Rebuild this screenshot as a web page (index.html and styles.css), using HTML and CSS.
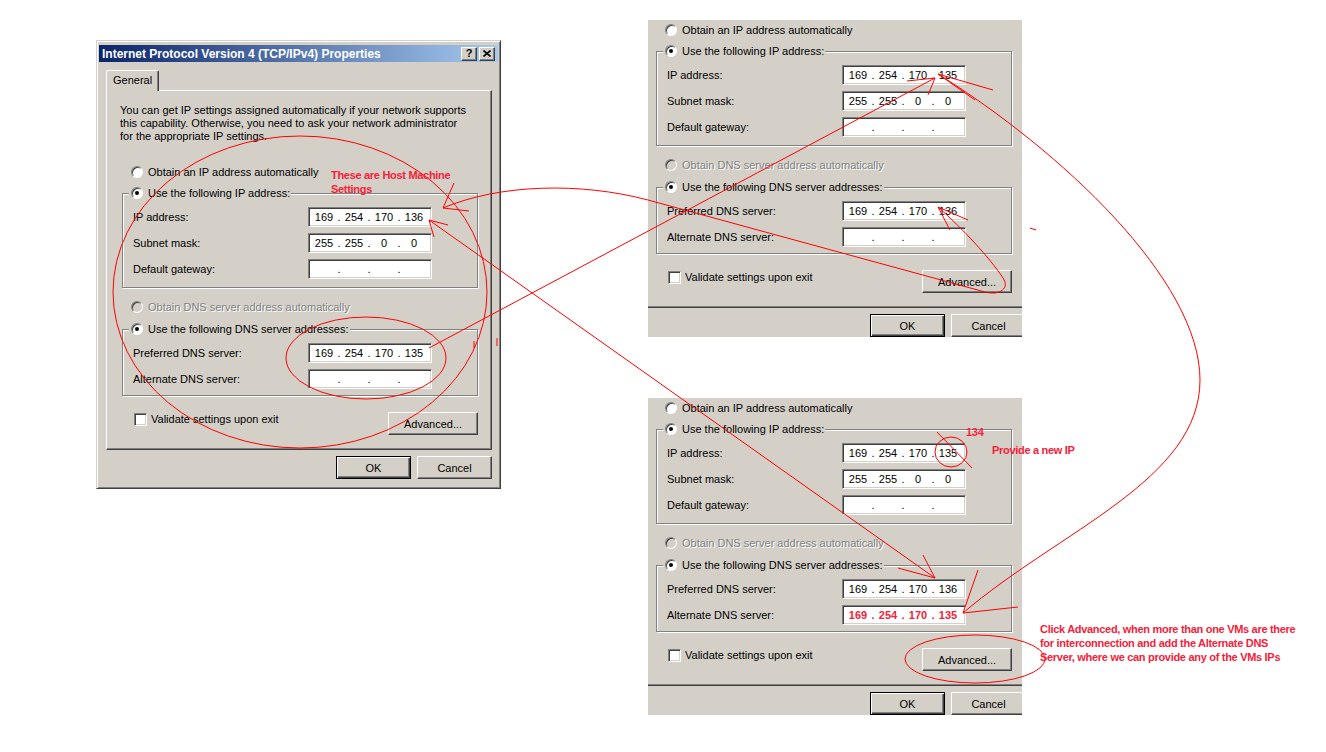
FILE: index.html
```html
<!DOCTYPE html>
<html>
<head>
<meta charset="utf-8">
<title>TCP/IPv4 Properties</title>
<link rel="stylesheet" href="styles.css">
</head>
<body>
<div class="desk">

  <div class="window">
    <div class="titlebar">
      <span class="title">Internet Protocol Version 4 (TCP/IPv4) Properties</span>
      <div class="caps">
        <span class="cap">?</span>
        <span class="cap"><svg width="8" height="7" viewBox="0 0 8 7"><path d="M0.5 0.5 L7.5 6.5 M7.5 0.5 L0.5 6.5" stroke="#000" stroke-width="1.6"/></svg></span>
      </div>
    </div>
    <div class="client">
      <div class="tab">General</div>
      <div class="panel">
        <p class="intro">You can get IP settings assigned automatically if your network supports<br>this capability. Otherwise, you need to ask your network administrator<br>for the appropriate IP settings.</p>
        <div class="opt opt-first"><span class="radio"></span><span>Obtain an IP address automatically</span></div>
        <div class="group group-ip">
          <div class="opt legend"><span class="radio on"></span><span>Use the following IP address:</span></div>
          <div class="field"><span class="lbl">IP address:</span><div class="ip"><span class="oct">169</span><span class="dot">.</span><span class="oct">254</span><span class="dot">.</span><span class="oct">170</span><span class="dot">.</span><span class="oct">136</span></div></div>
          <div class="field"><span class="lbl">Subnet mask:</span><div class="ip"><span class="oct">255</span><span class="dot">.</span><span class="oct">255</span><span class="dot">.</span><span class="oct">0</span><span class="dot">.</span><span class="oct">0</span></div></div>
          <div class="field"><span class="lbl">Default gateway:</span><div class="ip"><span class="oct"></span><span class="dot">.</span><span class="oct"></span><span class="dot">.</span><span class="oct"></span><span class="dot">.</span><span class="oct"></span></div></div>
        </div>
        <div class="opt opt-dns disabled"><span class="radio off"></span><span>Obtain DNS server address automatically</span></div>
        <div class="group group-dns">
          <div class="opt legend"><span class="radio on"></span><span>Use the following DNS server addresses:</span></div>
          <div class="field"><span class="lbl">Preferred DNS server:</span><div class="ip"><span class="oct">169</span><span class="dot">.</span><span class="oct">254</span><span class="dot">.</span><span class="oct">170</span><span class="dot">.</span><span class="oct">135</span></div></div>
          <div class="field"><span class="lbl">Alternate DNS server:</span><div class="ip"><span class="oct"></span><span class="dot">.</span><span class="oct"></span><span class="dot">.</span><span class="oct"></span><span class="dot">.</span><span class="oct"></span></div></div>
        </div>
        <div class="checkrow"><span class="check"></span><span class="clbl">Validate settings upon exit</span><span class="btn btn-adv">Advanced...</span></div>
      </div>
      <div class="footer"><span class="btn btn-default">OK</span><span class="btn">Cancel</span></div>
    </div>
  </div>

  <div class="crop crop-top">
    <div class="cropbody">
      <div class="panel">
        <div class="intro"></div>
        <div class="opt opt-first"><span class="radio"></span><span>Obtain an IP address automatically</span></div>
        <div class="group group-ip">
          <div class="opt legend"><span class="radio on"></span><span>Use the following IP address:</span></div>
          <div class="field"><span class="lbl">IP address:</span><div class="ip"><span class="oct">169</span><span class="dot">.</span><span class="oct">254</span><span class="dot">.</span><span class="oct">170</span><span class="dot">.</span><span class="oct">135</span></div></div>
          <div class="field"><span class="lbl">Subnet mask:</span><div class="ip"><span class="oct">255</span><span class="dot">.</span><span class="oct">255</span><span class="dot">.</span><span class="oct">0</span><span class="dot">.</span><span class="oct">0</span></div></div>
          <div class="field"><span class="lbl">Default gateway:</span><div class="ip"><span class="oct"></span><span class="dot">.</span><span class="oct"></span><span class="dot">.</span><span class="oct"></span><span class="dot">.</span><span class="oct"></span></div></div>
        </div>
        <div class="opt opt-dns disabled"><span class="radio off"></span><span>Obtain DNS server address automatically</span></div>
        <div class="group group-dns">
          <div class="opt legend"><span class="radio on"></span><span>Use the following DNS server addresses:</span></div>
          <div class="field"><span class="lbl">Preferred DNS server:</span><div class="ip"><span class="oct">169</span><span class="dot">.</span><span class="oct">254</span><span class="dot">.</span><span class="oct">170</span><span class="dot">.</span><span class="oct">136</span></div></div>
          <div class="field"><span class="lbl">Alternate DNS server:</span><div class="ip"><span class="oct"></span><span class="dot">.</span><span class="oct"></span><span class="dot">.</span><span class="oct"></span><span class="dot">.</span><span class="oct"></span></div></div>
        </div>
        <div class="checkrow"><span class="check"></span><span class="clbl">Validate settings upon exit</span><span class="btn btn-adv">Advanced...</span></div>
      </div>
      <div class="footer"><span class="btn btn-default">OK</span><span class="btn">Cancel</span></div>
    </div>
  </div>

  <div class="crop crop-bottom">
    <div class="cropbody">
      <div class="panel">
        <div class="intro"></div>
        <div class="opt opt-first"><span class="radio"></span><span>Obtain an IP address automatically</span></div>
        <div class="group group-ip">
          <div class="opt legend"><span class="radio on"></span><span>Use the following IP address:</span></div>
          <div class="field"><span class="lbl">IP address:</span><div class="ip"><span class="oct">169</span><span class="dot">.</span><span class="oct">254</span><span class="dot">.</span><span class="oct">170</span><span class="dot">.</span><span class="oct">135</span></div></div>
          <div class="field"><span class="lbl">Subnet mask:</span><div class="ip"><span class="oct">255</span><span class="dot">.</span><span class="oct">255</span><span class="dot">.</span><span class="oct">0</span><span class="dot">.</span><span class="oct">0</span></div></div>
          <div class="field"><span class="lbl">Default gateway:</span><div class="ip"><span class="oct"></span><span class="dot">.</span><span class="oct"></span><span class="dot">.</span><span class="oct"></span><span class="dot">.</span><span class="oct"></span></div></div>
        </div>
        <div class="opt opt-dns disabled"><span class="radio off"></span><span>Obtain DNS server address automatically</span></div>
        <div class="group group-dns">
          <div class="opt legend"><span class="radio on"></span><span>Use the following DNS server addresses:</span></div>
          <div class="field"><span class="lbl">Preferred DNS server:</span><div class="ip"><span class="oct">169</span><span class="dot">.</span><span class="oct">254</span><span class="dot">.</span><span class="oct">170</span><span class="dot">.</span><span class="oct">136</span></div></div>
          <div class="field"><span class="lbl">Alternate DNS server:</span><div class="ip ip-red"><span class="oct">169</span><span class="dot">.</span><span class="oct">254</span><span class="dot">.</span><span class="oct">170</span><span class="dot">.</span><span class="oct">135</span></div></div>
        </div>
        <div class="checkrow"><span class="check"></span><span class="clbl">Validate settings upon exit</span><span class="btn btn-adv">Advanced...</span></div>
      </div>
      <div class="footer"><span class="btn btn-default">OK</span><span class="btn">Cancel</span></div>
    </div>
  </div>

  <svg class="ink" width="1326" height="752" viewBox="0 0 1326 752">
    <g fill="none" stroke="#ff0000" stroke-width="1">
      <ellipse cx="300" cy="292" rx="187" ry="156"/>
      <ellipse cx="366" cy="358" rx="80" ry="41"/>
      <path d="M429 348 L935 78 M935 78 L907 81 M935 78 L928 95"/>
      <path d="M429 220 L935 578 M429 220 L448 225 M429 220 L434 237 M935 578 L898 568 M935 578 L923 555"/>
      <path d="M443 208 C500 184 580 182 648 200 L985 292 C1000 296 1010 288 1003 278 C990 258 962 228 938 207 M443 208 L454 183 M443 208 L469 211 M938 207 L968 220 M938 207 L950 230"/>
      <path d="M938 74 C1060 150 1200 280 1200 380 C1200 480 1060 530 963 613 M938 74 L993 90 M938 74 L975 100 M963 613 L1018 607 M963 613 L978 570"/>
      <ellipse cx="951" cy="452" rx="16" ry="15"/>
      <path d="M937 432 L972 468"/>
      <ellipse cx="975" cy="659" rx="70" ry="24"/>
      <path d="M1030 228 L1036 230 M474 341 L474 348 M497 338 L497 346"/>
    </g>
  </svg>

  <div class="note note-host">These are Host Machine<br>Settings</div>
  <div class="note note-134">134</div>
  <div class="note note-provide">Provide a new IP</div>
  <div class="note note-click">Click Advanced, when more than one VMs are there<br>for interconnection and add the Alternate DNS<br>Server, where we can provide any of the VMs IPs</div>

</div>
</body>
</html>
```
FILE: styles.css
```css
* { box-sizing: border-box; margin: 0; padding: 0; }

body {
  margin: 0;
  background: #ffffff;
  font-family: "Liberation Sans", Arial, sans-serif;
  font-size: 11px;
  color: #000000;
}

.desk {
  position: relative;
  width: 1326px;
  height: 752px;
  overflow: hidden;
}

/* ---------- main window ---------- */
.window {
  position: absolute;
  left: 96px;
  top: 40px;
  width: 405px;
  height: 449px;
  background: #d4d0c8;
  border: 1px solid;
  border-color: #d4d0c8 #404040 #404040 #d4d0c8;
  box-shadow: inset 1px 1px #ffffff, inset -1px -1px #808080;
  padding: 4px 2px 2px 2px;
}

.titlebar {
  height: 17px;
  background: linear-gradient(90deg, #0a246a 0%, #a6caf0 100%);
  display: flex;
  align-items: center;
  justify-content: space-between;
  padding: 0 3px 0 3px;
}

.title {
  color: #ffffff;
  font-weight: bold;
  font-size: 12px;
  white-space: nowrap;
}

.caps {
  display: flex;
  gap: 2px;
}

.cap {
  width: 16px;
  height: 14px;
  background: #d4d0c8;
  border: 1px solid;
  border-color: #ffffff #404040 #404040 #ffffff;
  box-shadow: inset -1px -1px #808080;
  display: flex;
  align-items: center;
  justify-content: center;
  font-weight: bold;
  font-size: 11px;
  line-height: 1;
}

.client {
  padding: 8px 7px 0 7px;
}

.tab {
  position: relative;
  z-index: 1;
  width: 53px;
  height: 21px;
  margin-bottom: -1px;
  padding: 3px 0 0 6px;
  background: #d4d0c8;
  border-top: 1px solid #ffffff;
  border-left: 1px solid #ffffff;
  border-right: 1px solid #404040;
  box-shadow: inset -1px 0 #808080;
  border-radius: 2px 2px 0 0;
  line-height: 13px;
}

/* ---------- tab panel (shared) ---------- */
.panel {
  width: 386px;
  height: 360px;
  background: #d4d0c8;
  border: 1px solid;
  border-color: #ffffff #404040 #404040 #ffffff;
  box-shadow: inset -1px -1px #808080;
  display: flex;
  flex-direction: column;
  align-items: flex-start;
}

.intro {
  margin: 13px 0 0 13px;
  height: 39px;
  line-height: 13px;
  white-space: nowrap;
}

.opt {
  display: flex;
  align-items: center;
  gap: 5px;
  height: 14px;
  line-height: 13px;
  margin-left: 24px;
  white-space: nowrap;
}

.opt-first { margin-top: 22px; }
.opt-dns { margin-top: 12px; }

.disabled {
  color: #808080;
  text-shadow: 1px 1px 0 #ffffff;
}

.radio {
  width: 12px;
  height: 12px;
  flex: none;
  border-radius: 50%;
  background: #ffffff;
  border: 1px solid;
  border-color: #808080 #ffffff #ffffff #808080;
  box-shadow: inset 1px 1px 0 #404040;
  display: flex;
  align-items: center;
  justify-content: center;
}

.radio.on::after {
  content: "";
  width: 4px;
  height: 4px;
  border-radius: 50%;
  background: #000000;
}

.radio.off {
  background: #d4d0c8;
}

.group {
  width: 356px;
  margin: 14px 0 0 15px;
  border: 1px solid #808080;
  box-shadow: inset 1px 1px #ffffff, 1px 1px #ffffff;
  display: flex;
  flex-direction: column;
  align-items: flex-start;
}

.group-ip { height: 95px; }
.group-dns { height: 67px; margin-top: 15px; }

.legend {
  margin: -8px 0 0 6px;
  padding: 0 1px 0 2px;
  background: #d4d0c8;
}

.field {
  display: flex;
  align-items: center;
  height: 20px;
  margin: 6px 0 0 10px;
}

.legend + .field { margin-top: 7px; }

.lbl {
  width: 175px;
  white-space: nowrap;
}

.ip {
  width: 124px;
  height: 20px;
  background: #ffffff;
  border: 1px solid;
  border-color: #808080 #ffffff #ffffff #808080;
  box-shadow: inset 1px 1px #404040, inset -1px -1px #d4d0c8;
  display: flex;
  align-items: center;
  padding-left: 3px;
  line-height: 13px;
}

.oct {
  width: 24px;
  text-align: center;
}

.dot {
  width: 6px;
  text-align: center;
}

.ip-red {
  color: #f5213a;
  font-weight: bold;
}

.checkrow {
  display: flex;
  align-items: flex-start;
  width: 356px;
  margin: 16px 0 0 15px;
}

.check {
  width: 13px;
  height: 13px;
  flex: none;
  margin-left: 12px;
  margin-top: 1px;
  background: #ffffff;
  border: 1px solid;
  border-color: #808080 #ffffff #ffffff #808080;
  box-shadow: inset 1px 1px #404040, inset -1px -1px #d4d0c8;
}

.clbl {
  margin-left: 4px;
  margin-top: 1px;
  line-height: 13px;
  white-space: nowrap;
}

.btn {
  width: 75px;
  height: 23px;
  background: #d4d0c8;
  border: 1px solid;
  border-color: #ffffff #404040 #404040 #ffffff;
  box-shadow: inset -1px -1px #808080;
  display: flex;
  align-items: center;
  justify-content: center;
  white-space: nowrap;
}

.btn-adv {
  width: 90px;
  margin-left: auto;
}

.btn-default {
  border-color: #000000;
  box-shadow: inset 1px 1px #ffffff, inset -1px -1px #404040, inset -2px -2px #808080;
}

.footer {
  width: 386px;
  display: flex;
  justify-content: flex-end;
  gap: 6px;
  margin-top: 6px;
}

/* ---------- cropped views ---------- */
.crop {
  position: absolute;
  left: 648px;
  width: 374px;
  height: 317px;
  overflow: hidden;
  background: #d4d0c8;
}

.crop-top { top: 20px; }
.crop-bottom { top: 398px; }

.cropbody {
  margin: -72px 0 0 -8px;
}

/* ---------- annotations ---------- */
.ink {
  position: absolute;
  left: 0;
  top: 0;
  pointer-events: none;
}

.note {
  position: absolute;
  color: #f5213a;
  font-weight: bold;
  font-size: 11px;
  line-height: 14px;
  letter-spacing: -0.3px;
  white-space: nowrap;
}

.note-host { left: 331px; top: 168px; }
.note-134 { left: 966px; top: 425px; }
.note-provide { left: 992px; top: 443px; }
.note-click { left: 1040px; top: 622px; }
```
